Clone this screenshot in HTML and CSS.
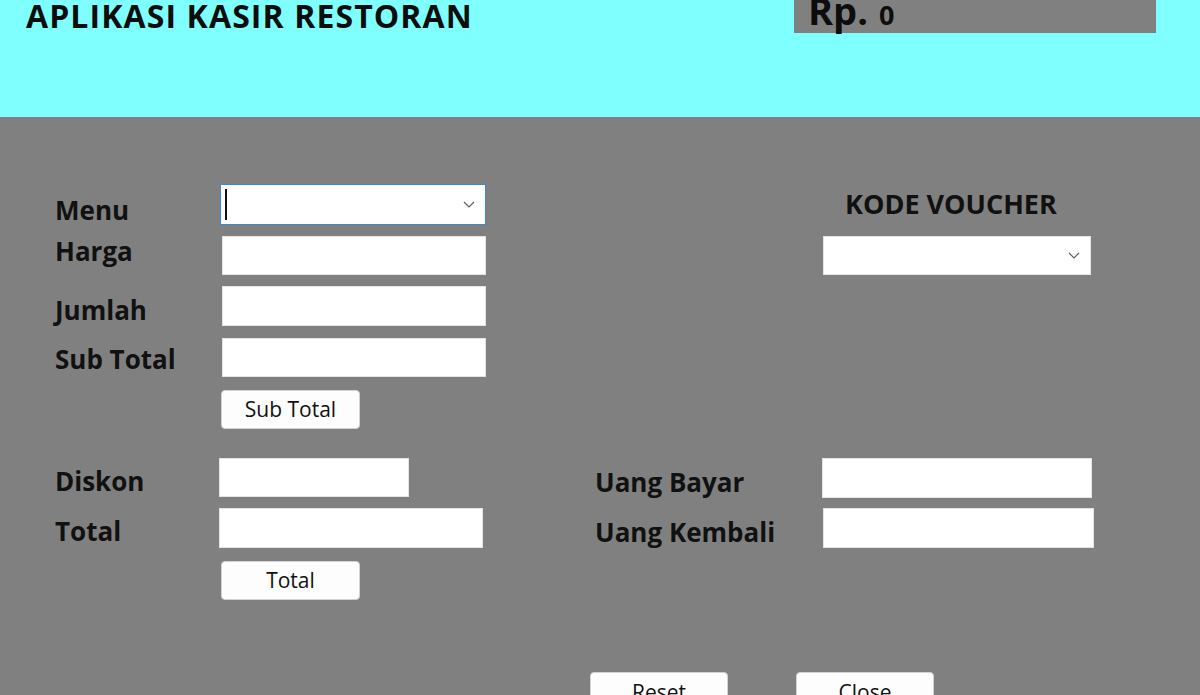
FILE: index.html
```html
<!DOCTYPE html>
<html lang="id">
<head>
<meta charset="utf-8">
<title>Aplikasi Kasir Restoran</title>
<link rel="stylesheet" href="styles.css">
</head>
<body>
<header class="header">
  <h1 class="title">APLIKASI KASIR RESTORAN</h1>
  <div class="total-box"><span class="rp">Rp.</span><span class="rp-val">0</span></div>
</header>
<main class="form">
  <!-- row 1 -->
  <label class="lbl lbl-menu">Menu</label>
  <div class="combo combo-menu">
    <span class="caret"></span>
    <svg class="chev" width="12" height="7" viewBox="0 0 12 7"><path d="M1 1l5 5 5-5" fill="none" stroke="#5f5f5f" stroke-width="1.2"/></svg>
  </div>
  <div class="voucher-lbl">KODE VOUCHER</div>

  <!-- row 2 -->
  <label class="lbl lbl-harga">Harga</label>
  <div class="field f-harga"></div>
  <div class="combo combo-voucher">
    <svg class="chev" width="12" height="7" viewBox="0 0 12 7"><path d="M1 1l5 5 5-5" fill="none" stroke="#5f5f5f" stroke-width="1.2"/></svg>
  </div>

  <!-- row 3 -->
  <label class="lbl lbl-jumlah">Jumlah</label>
  <div class="field f-jumlah"></div>

  <!-- row 4 -->
  <label class="lbl lbl-sub">Sub Total</label>
  <div class="field f-sub"></div>

  <!-- row 5 -->
  <button class="btn btn-sub">Sub Total</button>

  <!-- row 6 -->
  <label class="lbl lbl-diskon">Diskon</label>
  <div class="field f-diskon"></div>
  <label class="lbl lbl-bayar">Uang Bayar</label>
  <div class="field f-bayar"></div>

  <!-- row 7 -->
  <label class="lbl lbl-total">Total</label>
  <div class="field f-total"></div>
  <label class="lbl lbl-kembali">Uang Kembali</label>
  <div class="field f-kembali"></div>

  <!-- row 8 -->
  <button class="btn btn-total">Total</button>

  <!-- row 9 -->
  <div class="actions">
    <button class="btn btn-act">Reset</button>
    <button class="btn btn-act">Close</button>
  </div>
</main>
</body>
</html>
```

FILE: styles.css
```css
* { box-sizing: border-box; }

html, body {
  margin: 0;
  padding: 0;
  width: 1200px;
  height: 695px;
  overflow: hidden;
  background: #808080;
  font-family: "Open Sans", "Noto Sans", sans-serif;
  color: #111;
}

.header {
  height: 117px;
  background: #80ffff;
  display: flex;
  align-items: flex-start;
}

.title {
  margin: 0;
  padding-left: 26px;
  font-size: 32px;
  font-weight: 700;
  letter-spacing: 1.1px;
  line-height: 31px;
  color: #0d0d0d;
  white-space: nowrap;
}

.total-box {
  margin-left: auto;
  margin-right: 44px;
  width: 362px;
  height: 33px;
  background: #808080;
  padding-left: 14px;
  display: flex;
  align-items: baseline;
  gap: 11px;
  font-weight: 700;
  color: #0d0d0d;
  white-space: nowrap;
}

.rp { font-size: 38px; line-height: 20px; }
.rp-val { font-size: 27px; line-height: 20px; }

.form {
  display: grid;
  grid-template-columns: 165px 374px 229px 272px;
  grid-template-rows: 52px 50px 52px 52px 68px 50px 53px 111px;
  padding: 67px 0 0 55px;
  height: 578px;
}

.form > * { align-self: start; justify-self: start; }

.lbl {
  grid-column: 1;
  font-size: 26px;
  font-weight: 700;
  line-height: 30px;
  white-space: nowrap;
}

.lbl-menu   { grid-row: 1; margin-top: 11px; }
.lbl-harga  { grid-row: 2; margin-top: 0; }
.lbl-jumlah { grid-row: 3; margin-top: 9px; }
.lbl-sub    { grid-row: 4; margin-top: 6px; }
.lbl-diskon { grid-row: 6; margin-top: 8px; }
.lbl-total  { grid-row: 7; margin-top: 8px; }
.lbl-bayar  { grid-column: 3; grid-row: 6; margin-top: 9px; margin-left: 1px; }
.lbl-kembali{ grid-column: 3; grid-row: 7; margin-top: 9px; margin-left: 1px; }

.field {
  grid-column: 2;
  background: #fff;
  border: 1px solid #e4e4e4;
  height: 39px;
  width: 264px;
}

.f-harga  { grid-row: 2; margin-left: 2px; }
.f-jumlah { grid-row: 3; margin-left: 2px; height: 40px; }
.f-sub    { grid-row: 4; margin-left: 2px; }
.f-diskon { grid-row: 6; margin-left: -1px; width: 190px; }
.f-total  { grid-row: 7; margin-left: -1px; height: 40px; }
.f-bayar  { grid-column: 4; grid-row: 6; margin-left: -1px; width: 270px; height: 40px; }
.f-kembali{ grid-column: 4; grid-row: 7; width: 271px; height: 40px; }

.combo {
  background: #fff;
  display: flex;
  align-items: center;
  padding: 0 10px 0 4px;
}

.combo-menu {
  grid-column: 2;
  grid-row: 1;
  width: 266px;
  height: 41px;
  border: 1px solid #3a8bd0;
}

.combo-voucher {
  grid-column: 4;
  grid-row: 2;
  width: 268px;
  height: 39px;
  border: 1px solid #e4e4e4;
}

.caret {
  width: 2px;
  height: 31px;
  background: #111;
}

.chev { margin-left: auto; }

.voucher-lbl {
  grid-column: 4;
  grid-row: 1;
  margin-left: 22px;
  margin-top: 5px;
  font-size: 27px;
  font-weight: 700;
  line-height: 30px;
  white-space: nowrap;
}

.btn {
  font-family: "Open Sans", "Noto Sans", sans-serif;
  font-size: 21px;
  color: #111;
  background: #fdfdfd;
  border: 1px solid #d2d2d2;
  border-radius: 4px;
  width: 139px;
  height: 39px;
  padding: 0;
  line-height: 37px;
}

.btn-sub   { grid-column: 2; grid-row: 5; margin-left: 1px; }
.btn-total { grid-column: 2; grid-row: 8; margin-left: 1px; }

.actions {
  grid-column: 3 / span 2;
  grid-row: 9;
  display: flex;
  gap: 68px;
  margin-left: -4px;
}

.btn-act { width: 138px; height: 40px; }
```
